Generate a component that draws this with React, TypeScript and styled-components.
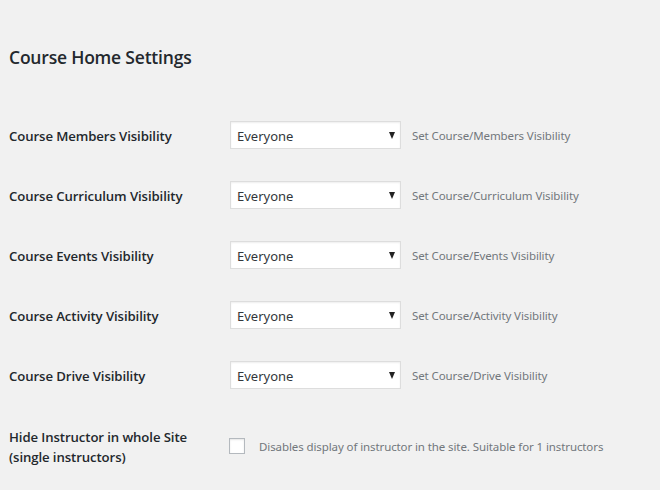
import React from "react";
import styled, { createGlobalStyle } from "styled-components";

const Global = createGlobalStyle`
  html, body { margin: 0; padding: 0; background: #f1f1f1; }
  body { font-family: "Noto Sans", "Open Sans", sans-serif; color: #23282d; }
`;

const Page = styled.div`
  width: 660px;
  height: 490px;
  overflow: hidden;
  padding: 0 0 0 9px;
  box-sizing: border-box;
`;

const Title = styled.h2`
  margin: 0;
  padding-top: 44px;
  font-family: "Open Sans", "Noto Sans", sans-serif;
  font-size: 17.5px;
  line-height: 26px;
  font-weight: 600;
  color: #23282d;
  letter-spacing: -0.2px;
`;

const Table = styled.div`
  margin-top: 35px;
  display: flex;
  flex-direction: column;
`;

const Row = styled.div<{ $h: number }>`
  display: flex;
  align-items: center;
  height: ${(p) => p.$h}px;
`;

const Label = styled.div`
  width: 220px;
  flex: none;
  padding-top: 1px;
  font-family: "Open Sans", "Noto Sans", sans-serif;
  font-size: 13.2px;
  line-height: 20px;
  font-weight: 600;
  color: #23282d;
  letter-spacing: -0.1px;
`;

const Select = styled.div`
  box-sizing: border-box;
  width: 171px;
  height: 28px;
  margin-left: 1px;
  background: #fff;
  border: 1px solid #ddd;
  box-shadow: inset 0 1px 2px rgba(0, 0, 0, 0.07);
  display: flex;
  align-items: center;
  justify-content: space-between;
  padding: 1px 5px 0 6px;
  font-size: 13px;
  color: #32373c;
`;

const Arrow = styled.span`
  width: 0;
  height: 0;
  border-left: 3.5px solid transparent;
  border-right: 3.5px solid transparent;
  border-top: 7px solid #222;
`;

const Desc = styled.span`
  margin-left: 11px;
  font-size: 11.5px;
  color: #72777c;
  letter-spacing: -0.1px;
`;

const Check = styled.span`
  box-sizing: border-box;
  width: 16px;
  height: 16px;
  flex: none;
  background: #fff;
  border: 1px solid #b4b9be;
  box-shadow: inset 0 1px 2px rgba(0, 0, 0, 0.1);
`;

const CheckDesc = styled(Desc)`
  margin-left: 14px;
`;

const rows = [
  ["Course Members Visibility", "Set Course/Members Visibility"],
  ["Course Curriculum Visibility", "Set Course/Curriculum Visibility"],
  ["Course Events Visibility", "Set Course/Events Visibility"],
  ["Course Activity Visibility", "Set Course/Activity Visibility"],
  ["Course Drive Visibility", "Set Course/Drive Visibility"],
];

export default function App() {
  return (
    <Page>
      <Global />
      <Title>Course Home Settings</Title>
      <Table>
        {rows.map(([l, d]) => (
          <Row key={l} $h={60}>
            <Label>{l}</Label>
            <Select>
              <span>Everyone</span>
              <Arrow />
            </Select>
            <Desc>{d}</Desc>
          </Row>
        ))}
        <Row $h={82}>
          <Label>
            Hide Instructor in whole Site
            <br />
            (single instructors)
          </Label>
          <Check />
          <CheckDesc>Disables display of instructor in the site. Suitable for 1 instructors</CheckDesc>
        </Row>
      </Table>
    </Page>
  );
}
